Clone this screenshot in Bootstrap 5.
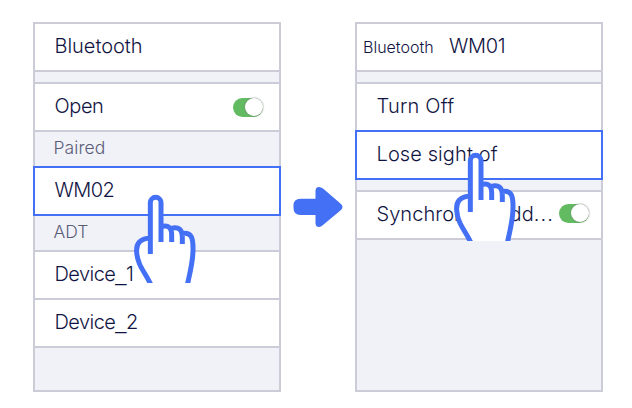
<!DOCTYPE html>
<html lang="en">
<head>
<meta charset="utf-8">
<meta name="viewport" content="width=device-width, initial-scale=1">
<title>Bluetooth unpairing</title>
<link href="https://cdn.jsdelivr.net/npm/bootstrap@5.3.0/dist/css/bootstrap.min.css" rel="stylesheet">
<style>
body{width:632px;height:408px;overflow:hidden;background:#fff;color:#111443;font-family:Inter,"Liberation Sans",sans-serif;font-weight:300}
.stage{padding:22px 29px 16px 33px;height:408px}
.phone{width:248px;height:370px;background:#f1f2f8;border:2px solid #cccbd8}
.entry{height:48px;padding:0 16px 2px 19.5px;background:#fff;border-bottom:2px solid #cccbd8;font-size:20px;line-height:44px;white-space:nowrap}
.entry.head{padding-left:6px}
.entry.toggle{line-height:46px}
.spacer{height:12px;border-bottom:2px solid #cccbd8}
.caption{height:36px;padding-left:18.5px;font-size:17.5px;line-height:32px;color:#5b5d78;border-bottom:2px solid #cccbd8}
.picked{height:50px;margin:-2px -2px 0;padding:0 19.5px;border:2px solid #4470f5}
.small-title{font-size:16px;width:86px;line-height:46px}
.switch{width:30px;height:19px;border-radius:10px;background:#63bb61;margin-top:2px}
.entry.sync{padding-right:12px}
.sync .switch{margin-top:-2px}
.knob{width:18px;height:18px;border-radius:50%;background:#fff;box-shadow:0 0 2px #777}
.hand{width:100px;height:103px;overflow:hidden}
.hand-a{left:120px;top:180px}
.hand-b{left:440px;top:138px}
.t-bt{letter-spacing:-.03px}
.t-open{letter-spacing:-.4px}
.t-pair{letter-spacing:.1px}
.t-wm2{letter-spacing:-.6px}
.t-wm1{letter-spacing:-.3px}
.t-dev{letter-spacing:-.55px}
.under{font-family:"Liberation Sans",sans-serif}
.t-turn{letter-spacing:.2px}
.t-lose{letter-spacing:.1px}
.t-sync{letter-spacing:.05px}
.dots{letter-spacing:1.1px}
</style>
<script src="https://cdn.jsdelivr.net/npm/bootstrap@5.3.0/dist/js/bootstrap.bundle.min.js"></script>
</head>
<body>
<main class="stage d-flex justify-content-between position-relative">
<section class="phone">
<div class="entry"><span class="t-bt">Bluetooth</span></div>
<div class="spacer"></div>
<div class="entry toggle d-flex justify-content-between align-items-center"><span class="t-open">Open</span><span class="switch d-flex justify-content-end"><span class="knob"></span></span></div>
<div class="caption"><span class="t-pair">Paired</span></div>
<div class="entry picked"><span class="t-wm2">WM02</span></div>
<div class="caption"><span class="t-adt">ADT</span></div>
<div class="entry"><span class="t-dev">Device<span class="under">_</span>1</span></div>
<div class="entry"><span class="t-dev">Device<span class="under">_</span>2</span></div>
</section>
<svg class="align-self-start" width="50" height="42" viewBox="0 0 50 42" style="margin-top:164px" aria-hidden="true"><path fill="#4470f5" d="M7.500 12.700H22.500V5Q22.500 1 26 1Q28 1 30 2.600L48 18Q51 21 48 24L30 39Q28 41 26 41Q22.500 41 22.500 37V29H7.500Q.5 29 .5 22V19.500Q.5 12.700 7.500 12.700Z"/></svg>
<section class="phone">
<div class="entry head d-flex"><span class="small-title"><span class="t-sm">Bluetooth</span></span><span class="t-wm1">WM01</span></div>
<div class="spacer"></div>
<div class="entry"><span class="t-turn">Turn Off</span></div>
<div class="entry picked"><span class="t-lose">Lose sight of</span></div>
<div class="spacer"></div>
<div class="entry toggle sync d-flex justify-content-between align-items-center"><span class="t-sync">Synchronize add<span class="dots">...</span></span><span class="switch d-flex justify-content-end"><span class="knob"></span></span></div>
</section>
<svg class="hand hand-a position-absolute" viewBox="0 0 300 309" fill="none" stroke="#4470f5" stroke-width="15" aria-hidden="true">
<path id="palm" fill="#fff" stroke="none" d="M91 174V66A16 16 0 0 1 123 66V141Q148 130 155 148Q180 135 187 160C215 155 220 175 219 210C219 245 210 275 202 312H93C75 275 50 255 50 215C48 190 60 174 91 174Z"/>
<path id="lines" d="M91 222V68A16 16 0 0 1 123 68V186M123 141Q155 130 155 165V186M152 146Q187 134 187 173V192M184 161C213 155 220 170 219 210C219 245 210 277 202 315M91 174C60 176 48 190 50 216C52 257 78 280 93 315"/>
</svg>
<svg class="hand hand-b position-absolute" viewBox="0 0 300 309" fill="none" stroke="#4470f5" stroke-width="15" aria-hidden="true"><use href="#palm"/><use href="#lines"/></svg>
</main>
</body>
</html>
